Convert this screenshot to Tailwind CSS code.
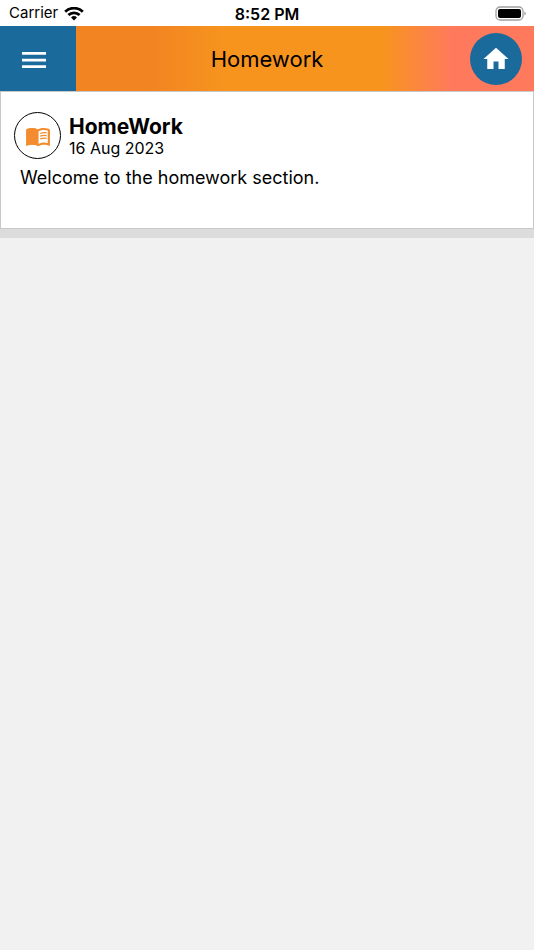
<!DOCTYPE html>
<html lang="en">

<head>
    <meta charset="UTF-8">
    <meta name="viewport" content="width=device-width, initial-scale=1.0">
    <title>Homework</title>
    <script src="https://cdn.jsdelivr.net/npm/@tailwindcss/browser@4"></script>
</head>

<body class="min-h-screen bg-[#f1f1f1] text-black font-['Inter','Liberation_Sans',sans-serif]">

    <!-- Status bar -->
    <div class="h-[26px] bg-white grid grid-cols-3 items-center px-[8px] pt-px text-[15px]">
        <div class="flex items-center gap-[6px] pl-px">
            <span>Carrier</span>
            <svg class="w-5 h-[14px]" viewBox="0 0 20 14" fill="none" stroke="black" stroke-width="2.8">
                <path d="M1.2 4.8a12.5 12.5 0 0 1 17.6 0" />
                <path d="M4.4 8.1a8 8 0 0 1 11.2 0" />
                <path d="M10 13.500l-3-3a4.300 4.300 0 0 1 6 0z" fill="black" stroke="none" />
            </svg>
        </div>
        <span class="text-center text-base leading-6 font-semibold">8:52 PM</span>
        <svg class="w-8 h-4 justify-self-end" viewBox="0 0 32 16">
            <rect x="2" y="1" width="27" height="13" rx="4" fill="white" stroke="#a0a0a0" stroke-width="1.3" />
            <rect x="4" y="3" width="23" height="9" rx="2" fill="black" />
            <path d="M30.400 5.500c1.800.7 1.800 3.300 0 4z" fill="#a0a0a0" />
        </svg>
    </div>

    <!-- Header -->
    <header class="h-[65px] flex">
        <button type="button" aria-label="Menu" class="w-[76px] shrink-0 bg-[#1b6a9c] pl-[19px]">
            <svg class="w-[30px] h-[34px]" viewBox="0 0 30 34" fill="white">
                <path d="M3 10h24v2.700H3zM3 16.700h24v2.700H3zM3 23.300h24V26H3z" />
            </svg>
        </button>
        <div class="flex-1 grid grid-cols-[1fr_auto] items-center pr-3 bg-[linear-gradient(90deg,#f28522_0%,#f28522_17%,#f7941e_33%,#f7941e_67%,#ff7a5c_82%,#ff7a5c_100%)]">
            <h1 class="text-center pr-[12px] text-[22px] leading-7">Homework</h1>
            <a href="#" aria-label="Home" class="size-[52px] rounded-full bg-[#1b6a9c] flex items-center justify-center">
                <svg class="size-[30px]" viewBox="0 0 24 24" fill="white">
                    <path d="M10 20v-6h4v6h5v-8h3L12 3 2 12h3v8z" />
                </svg>
            </a>
        </div>
    </header>

    <!-- Homework entries -->
    <main class="border-b-[9px] border-[#dcdcdc]">
        <article class="bg-white border border-[#c8c8c8] px-[13px] pt-[20px] pb-[38px]">
            <div class="flex items-center gap-2">
                <div class="size-[47px] rounded-full border border-black flex items-center justify-center">
                    <svg class="size-[26px]" viewBox="0 0 24 24">
                        <path fill="#f28c2e" d="M21 5c-1.11-.35-2.33-.5-3.5-.5-1.95 0-4.05.4-5.5 1.5-1.45-1.1-3.55-1.5-5.5-1.5S2.45 4.9 1 6v14.65c0 .25.25.5.5.5.1 0 .15-.05.25-.05C3.1 20.45 5.05 20 6.5 20c1.95 0 4.05.4 5.5 1.5 1.35-.85 3.8-1.5 5.5-1.5 1.65 0 3.35.3 4.75 1.05.1.05.15.05.25.05.25 0 .5-.25.5-.5V6c-.6-.45-1.25-.75-2-1zm0 13.5c-1.1-.35-2.3-.5-3.5-.5-1.7 0-4.15.65-5.5 1.5V8c1.35-.85 3.8-1.5 5.5-1.5 1.2 0 2.4.15 3.5.5v11.5z" />
                        <path fill="#f28c2e" d="M2 6h10.500v14H2z" />
                        <path fill="none" stroke="#f28c2e" stroke-width="1.200" d="M14 9.700q3-1.200 6-.6M14 12.200q3-1.200 6-.6M14 14.700q3-1.200 6-.6" />
                    </svg>
                </div>
                <div>
                    <h2 class="text-[21px] leading-6 font-bold">HomeWork</h2>
                    <p class="text-base leading-[18px]">16 Aug 2023</p>
                </div>
            </div>
            <p class="pl-[6px] pt-[7px] text-lg leading-6">Welcome to the homework section.</p>
        </article>
    </main>

</body>

</html>
